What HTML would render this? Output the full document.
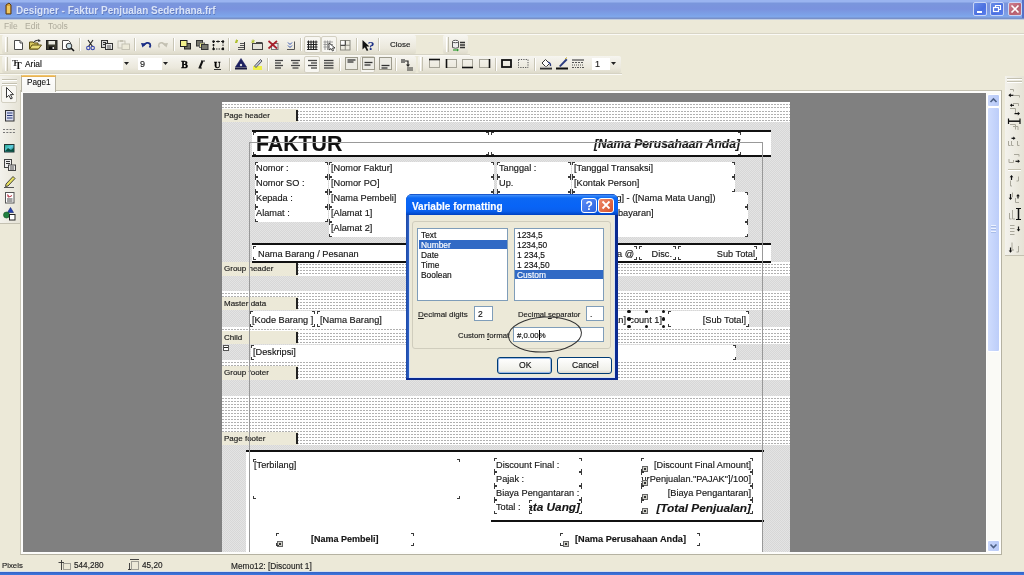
<!DOCTYPE html>
<html><head><meta charset="utf-8"><style>
*{margin:0;padding:0;box-sizing:border-box}
html,body{width:1024px;height:575px;overflow:hidden;background:#ECE9D8;font-family:"Liberation Sans",sans-serif;color:#000;position:relative}
#root{position:absolute;left:0;top:0;width:1024px;height:575px;overflow:hidden;will-change:transform}
.a{position:absolute}
.t{position:absolute;white-space:pre;line-height:1;-webkit-text-stroke:0.15px currentColor}
.dot{background-color:#fff;background-image:linear-gradient(#fff 2px,transparent 2px),linear-gradient(90deg,#b0b0b0 2px,#fff 2px);background-size:3px 3px;background-position:0 0}
.hat{background-color:#e4e4e4;background-image:linear-gradient(45deg,#d7d7d7 25%,transparent 25%,transparent 75%,#d7d7d7 75%),linear-gradient(45deg,#d7d7d7 25%,transparent 25%,transparent 75%,#d7d7d7 75%);background-size:2px 2px;background-position:0 0,1px 1px}
.lbl{position:absolute;left:0;width:76px;background:#ECE9D8;font-size:8px;padding-left:2px;white-space:pre;color:#1a1a1a;-webkit-text-stroke:0.15px currentColor}
.lbl:after{content:"";position:absolute;right:0;top:1px;bottom:1px;width:2px;background:#222}
.w{position:absolute;background:#fff}
.sep{position:absolute;width:2px;border-left:1px solid #c9c6b6;border-right:1px solid #fff}
.grip{position:absolute;width:3px;border-left:1px solid #fff;border-right:1px solid #c4c1b1}
svg{position:absolute;overflow:visible}
</style></head><body><div id="root">
<div class="a" style="left:0px;top:0px;width:1024px;height:19px;background:linear-gradient(#9ab4f0 0px,#9ab4f0 2px,#7a96dc 3px,#7a92de 9px,#7ca2e8 15px,#80a8ec 17px,#7890c8 18px,#7890c8 19px)"></div>
<div class="a" style="left:0px;top:19px;width:1024px;height:1px;background:#c2cde0"></div>
<div class="t" style="left:16px;top:5.5px;font-size:10px;font-weight:bold;color:#dae4f8;-webkit-text-stroke:0;text-shadow:0.5px 0.5px 0 rgba(60,80,150,0.5)">Designer - Faktur Penjualan Sederhana.frf</div>
<svg style="left:2px;top:2px" width="12" height="14"><path d="M4 3 L7 1 L9 3 L9 12 L4 12 Z" fill="#d9a43a" stroke="#5a3a10" stroke-width="1"/><rect x="5" y="4" width="3" height="7" fill="#f0c860"/></svg>
<div class="a" style="left:973px;top:2px;width:14px;height:14px;background:linear-gradient(135deg,#6a8de8,#4a6fe0 60%,#5b80ee);border:1px solid #c9d6f6;border-radius:2px"></div>
<div class="a" style="left:990px;top:2px;width:14px;height:14px;background:linear-gradient(135deg,#6a8de8,#4a6fe0 60%,#5b80ee);border:1px solid #c9d6f6;border-radius:2px"></div>
<div class="a" style="left:1008px;top:2px;width:14px;height:14px;background:linear-gradient(135deg,#d0808f,#b86070 60%,#c07080);border:1px solid #c9d6f6;border-radius:2px"></div>
<svg style="left:973px;top:2px" width="50" height="14"><rect x="4" y="9" width="5" height="2" fill="#fff"/><rect x="20.5" y="5.5" width="5" height="4" fill="none" stroke="#fff" stroke-width="1.2"/><path d="M22.5 5.5 V3.5 H27.5 V7.5 H25.5" fill="none" stroke="#fff" stroke-width="1.2"/><path d="M38.5 3.5 L45.5 10.5 M45.5 3.5 L38.5 10.5" stroke="#fff" stroke-width="1.6"/></svg>
<div class="a" style="left:1022px;top:0px;width:2px;height:18px;background:#5470c8"></div>
<div class="a" style="left:0px;top:20px;width:1024px;height:14px;background:#ECE9D8"></div>
<div class="a" style="left:0px;top:33px;width:1024px;height:1px;background:#d8d5c6"></div>
<div class="a" style="left:0px;top:34px;width:1024px;height:1px;background:#fbfaf6"></div>
<div class="t" style="left:4px;top:22px;font-size:8.5px;color:#adaa9b;-webkit-text-stroke:0">File</div>
<div class="t" style="left:25px;top:22px;font-size:8.5px;color:#adaa9b;-webkit-text-stroke:0">Edit</div>
<div class="t" style="left:48px;top:22px;font-size:8.5px;color:#adaa9b;-webkit-text-stroke:0">Tools</div>
<div class="a" style="left:0px;top:54px;width:470px;height:1px;background:#d6d3c4"></div>
<div class="a" style="left:0px;top:55px;width:470px;height:1px;background:#faf9f4"></div>
<div class="a" style="left:0px;top:73px;width:622px;height:1px;background:#d6d3c4"></div>
<div class="a" style="left:0px;top:74px;width:622px;height:1px;background:#faf9f4"></div>
<div class="a" style="left:2px;top:35px;width:414px;height:19px;background:linear-gradient(#f6f5f0,#ebe8dc 70%,#dedbcb);border-radius:2px"></div>
<div class="a" style="left:443px;top:35px;width:25px;height:19px;background:linear-gradient(#f6f5f0,#ebe8dc 70%,#dedbcb);border-radius:2px"></div>
<div class="a" style="left:2px;top:56px;width:414px;height:17px;background:linear-gradient(#f6f5f0,#ebe8dc 70%,#dedbcb);border-radius:2px"></div>
<div class="a" style="left:418px;top:56px;width:203px;height:17px;background:linear-gradient(#f6f5f0,#ebe8dc 70%,#dedbcb);border-radius:2px"></div>
<div class="grip" style="left:5px;top:37px;width:3px;height:15px;"></div>
<div class="grip" style="left:446px;top:37px;width:3px;height:15px;"></div>
<div class="grip" style="left:5px;top:57px;width:3px;height:14px;"></div>
<div class="grip" style="left:420px;top:57px;width:3px;height:14px;"></div>
<div class="sep" style="left:79px;top:38px;width:2px;height:13px;"></div>
<div class="sep" style="left:134px;top:38px;width:2px;height:13px;"></div>
<div class="sep" style="left:173px;top:38px;width:2px;height:13px;"></div>
<div class="sep" style="left:228px;top:38px;width:2px;height:13px;"></div>
<div class="sep" style="left:300px;top:38px;width:2px;height:13px;"></div>
<div class="sep" style="left:356px;top:38px;width:2px;height:13px;"></div>
<div class="sep" style="left:378px;top:38px;width:2px;height:13px;"></div>
<div class="sep" style="left:229px;top:58px;width:2px;height:13px;"></div>
<div class="sep" style="left:267px;top:58px;width:2px;height:13px;"></div>
<div class="sep" style="left:339px;top:58px;width:2px;height:13px;"></div>
<div class="sep" style="left:395px;top:58px;width:2px;height:13px;"></div>
<div class="sep" style="left:495px;top:58px;width:2px;height:13px;"></div>
<div class="sep" style="left:534px;top:58px;width:2px;height:13px;"></div>
<div class="a" style="left:304px;top:36px;width:17px;height:17px;background:#f7f6f1;border:1px solid #d3d0c2;border-radius:2px"></div>
<div class="a" style="left:321px;top:36px;width:16px;height:17px;background:#f7f6f1;border:1px solid #d3d0c2;border-radius:2px"></div>
<div class="a" style="left:304px;top:56px;width:16px;height:17px;background:#f7f6f1;border:1px solid #d3d0c2;border-radius:2px"></div>
<div class="a" style="left:360px;top:56px;width:15px;height:17px;background:#f7f6f1;border:1px solid #d3d0c2;border-radius:2px"></div>
<div class="t" style="left:390px;top:41px;font-size:8px;color:#222">Close</div>
<div class="a" style="left:11px;top:58px;width:112px;height:12px;background:#fff"></div>
<div class="t" style="left:25px;top:60px;font-size:8.4px;color:#111">Arial</div>
<svg style="left:12px;top:58px" width="12" height="12"><text x="0" y="8" font-family="Liberation Serif" font-size="9" font-weight="bold" fill="#333">T</text><text x="3" y="11" font-family="Liberation Serif" font-size="10" font-weight="bold" fill="#111">T</text></svg>
<svg style="left:124px;top:62px" width="6" height="4"><path d="M0 0 H5 L2.5 3 Z" fill="#222"/></svg>
<div class="a" style="left:138px;top:58px;width:24px;height:12px;background:#fff"></div>
<div class="t" style="left:140px;top:59.5px;font-size:9px;color:#222">9</div>
<svg style="left:163px;top:62px" width="6" height="4"><path d="M0 0 H5 L2.5 3 Z" fill="#222"/></svg>
<div class="a" style="left:592px;top:58px;width:18px;height:12px;background:#fff"></div>
<div class="t" style="left:595px;top:59.5px;font-size:9px;color:#222">1</div>
<svg style="left:611px;top:62px" width="6" height="4"><path d="M0 0 H5 L2.5 3 Z" fill="#222"/></svg>
<div class="a" style="left:0px;top:76px;width:20px;height:148px;background:linear-gradient(90deg,#f3f2ec,#e6e3d6)"></div>
<div class="a" style="left:2px;top:79px;width:15px;height:1px;background:#c4c1b1"></div>
<div class="a" style="left:2px;top:80px;width:15px;height:1px;background:#fff"></div>
<div class="a" style="left:2px;top:83px;width:15px;height:1px;background:#c4c1b1"></div>
<div class="a" style="left:2px;top:84px;width:15px;height:1px;background:#fff"></div>
<div class="a" style="left:1px;top:85px;width:16px;height:18px;background:#f7f6f1;border:1px solid #d3d0c2;border-radius:2px"></div>
<div class="a" style="left:0px;top:223px;width:20px;height:1px;background:#c4c1b1"></div>
<div class="a" style="left:1005px;top:76px;width:19px;height:180px;background:linear-gradient(90deg,#f3f2ec,#e6e3d6)"></div>
<div class="a" style="left:1007px;top:78px;width:15px;height:1px;background:#c4c1b1"></div>
<div class="a" style="left:1007px;top:79px;width:15px;height:1px;background:#fff"></div>
<div class="a" style="left:1007px;top:81px;width:15px;height:1px;background:#c4c1b1"></div>
<div class="a" style="left:1007px;top:82px;width:15px;height:1px;background:#fff"></div>
<div class="a" style="left:1008px;top:169px;width:13px;height:1px;background:#c4c1b1"></div>
<div class="a" style="left:1008px;top:170px;width:13px;height:1px;background:#fff"></div>
<div class="a" style="left:1005px;top:255px;width:19px;height:1px;background:#c4c1b1"></div>
<div class="a" style="left:20px;top:90px;width:982px;height:465px;background:#fdfdfb;border-top:1px solid #c5c2b2;border-right:1px solid #b5b2a2;border-bottom:1px solid #b5b2a2;border-left:1px solid #c9c6b6"></div>
<div class="a" style="left:21px;top:75px;width:35px;height:17px;background:linear-gradient(#fefefe,#f6f6f2);border-left:1px solid #b5b2a2;border-right:1px solid #b5b2a2"></div>
<div class="a" style="left:21px;top:75px;width:35px;height:2px;background:linear-gradient(#f5cf7c,#e3a845);border-radius:2px 2px 0 0"></div>
<div class="t" style="left:27px;top:78.5px;font-size:8.2px;color:#111;-webkit-text-stroke:0.1px #111">Page1</div>
<div class="a" style="left:23px;top:93px;width:963px;height:459px;background:#808080"></div>
<div class="a" style="left:222px;top:102px;width:568px;height:450px;overflow:hidden">
<div class="a dot" style="left:0;top:0px;width:568px;height:7px"></div>
<div class="a dot" style="left:0;top:7px;width:568px;height:13px"></div>
<div class="lbl" style="top:7px;height:13px;line-height:13px">Page header</div>
<div class="a hat" style="left:0;top:20px;width:568px;height:140px"></div>
<div class="a dot" style="left:0;top:160px;width:568px;height:14px"></div>
<div class="lbl" style="top:160px;height:14px;line-height:14px">Group header</div>
<div class="a hat" style="left:0;top:174px;width:568px;height:15px"></div>
<div class="a dot" style="left:0;top:189px;width:568px;height:6px"></div>
<div class="a dot" style="left:0;top:195px;width:568px;height:13px"></div>
<div class="lbl" style="top:195px;height:13px;line-height:13px">Master data</div>
<div class="a hat" style="left:0;top:208px;width:568px;height:17px"></div>
<div class="a dot" style="left:0;top:225px;width:568px;height:4px"></div>
<div class="a dot" style="left:0;top:229px;width:568px;height:13px"></div>
<div class="lbl" style="top:229px;height:13px;line-height:13px">Child</div>
<div class="a hat" style="left:0;top:242px;width:568px;height:16px"></div>
<div class="a dot" style="left:0;top:258px;width:568px;height:6px"></div>
<div class="a dot" style="left:0;top:264px;width:568px;height:14px"></div>
<div class="lbl" style="top:264px;height:14px;line-height:14px">Group footer</div>
<div class="a hat" style="left:0;top:278px;width:568px;height:16px"></div>
<div class="a dot" style="left:0;top:294px;width:568px;height:36px"></div>
<div class="a dot" style="left:0;top:330px;width:568px;height:13px"></div>
<div class="lbl" style="top:330px;height:13px;line-height:13px">Page footer</div>
<div class="a hat" style="left:0;top:343px;width:568px;height:107px"></div>
</div>
<div class="a" style="left:252px;top:130px;width:519px;height:27px;background:#fff;"></div>
<div class="a" style="left:252px;top:130px;width:519px;height:2px;background:#111"></div>
<div class="a" style="left:252px;top:155px;width:519px;height:2px;background:#111"></div>
<div class="a" style="left:253px;top:132px;width:236px;height:23px;overflow:hidden"><div class="t" style="left:3px;top:1.3px;height:23px;line-height:23px;font-size:21.3px;color:#161616;font-weight:bold;color:#111">FAKTUR</div></div>
<div class="a" style="left:491px;top:132px;width:250px;height:23px;overflow:hidden"><div class="t" style="right:1px;top:1px;height:23px;line-height:23px;font-size:12.1px;color:#161616;font-weight:bold;font-style:italic;color:#1a1a1a">[Nama Perusahaan Anda]</div></div>
<div class="a" style="left:255px;top:162px;width:73px;height:60px;background:#fff;"></div>
<div class="a" style="left:329px;top:162px;width:165px;height:75px;background:#fff;"></div>
<div class="a" style="left:497px;top:162px;width:74px;height:60px;background:#fff;"></div>
<div class="a" style="left:572px;top:162px;width:163px;height:30px;background:#fff;"></div>
<div class="a" style="left:572px;top:192px;width:176px;height:45px;background:#fff;"></div>
<div class="a" style="left:255px;top:162px;width:73px;height:15px;overflow:hidden"><div class="t" style="left:1px;top:-0.8px;height:15px;line-height:15px;font-size:9.2px;color:#161616;">Nomor :</div></div>
<div class="a" style="left:255px;top:177px;width:73px;height:15px;overflow:hidden"><div class="t" style="left:1px;top:-0.8px;height:15px;line-height:15px;font-size:9.2px;color:#161616;">Nomor SO :</div></div>
<div class="a" style="left:255px;top:192px;width:73px;height:15px;overflow:hidden"><div class="t" style="left:1px;top:-0.8px;height:15px;line-height:15px;font-size:9.2px;color:#161616;">Kepada :</div></div>
<div class="a" style="left:255px;top:207px;width:73px;height:15px;overflow:hidden"><div class="t" style="left:1px;top:-0.8px;height:15px;line-height:15px;font-size:9.2px;color:#161616;">Alamat :</div></div>
<div class="a" style="left:329px;top:162px;width:165px;height:15px;overflow:hidden"><div class="t" style="left:2px;top:-0.8px;height:15px;line-height:15px;font-size:9.2px;color:#161616;">[Nomor Faktur]</div></div>
<div class="a" style="left:329px;top:177px;width:165px;height:15px;overflow:hidden"><div class="t" style="left:2px;top:-0.8px;height:15px;line-height:15px;font-size:9.2px;color:#161616;">[Nomor PO]</div></div>
<div class="a" style="left:329px;top:192px;width:165px;height:15px;overflow:hidden"><div class="t" style="left:2px;top:-0.8px;height:15px;line-height:15px;font-size:9.2px;color:#161616;">[Nama Pembeli]</div></div>
<div class="a" style="left:329px;top:207px;width:165px;height:15px;overflow:hidden"><div class="t" style="left:2px;top:-0.8px;height:15px;line-height:15px;font-size:9.2px;color:#161616;">[Alamat 1]</div></div>
<div class="a" style="left:329px;top:222px;width:165px;height:15px;overflow:hidden"><div class="t" style="left:2px;top:-0.8px;height:15px;line-height:15px;font-size:9.2px;color:#161616;">[Alamat 2]</div></div>
<div class="a" style="left:497px;top:162px;width:74px;height:15px;overflow:hidden"><div class="t" style="left:2px;top:-0.8px;height:15px;line-height:15px;font-size:9.2px;color:#161616;">Tanggal :</div></div>
<div class="a" style="left:497px;top:177px;width:74px;height:15px;overflow:hidden"><div class="t" style="left:2px;top:-0.8px;height:15px;line-height:15px;font-size:9.2px;color:#161616;">Up.</div></div>
<div class="a" style="left:497px;top:192px;width:74px;height:15px;overflow:hidden"><div class="t" style="left:2px;top:-0.8px;height:15px;line-height:15px;font-size:9.2px;color:#161616;"></div></div>
<div class="a" style="left:497px;top:207px;width:74px;height:15px;overflow:hidden"><div class="t" style="left:2px;top:-0.8px;height:15px;line-height:15px;font-size:9.2px;color:#161616;"></div></div>
<div class="a" style="left:572px;top:162px;width:163px;height:15px;overflow:hidden"><div class="t" style="left:2px;top:-0.8px;height:15px;line-height:15px;font-size:9.2px;color:#161616;">[Tanggal Transaksi]</div></div>
<div class="a" style="left:572px;top:177px;width:163px;height:15px;overflow:hidden"><div class="t" style="left:2px;top:-0.8px;height:15px;line-height:15px;font-size:9.2px;color:#161616;">[Kontak Person]</div></div>
<div class="a" style="left:572px;top:192px;width:176px;height:15px;overflow:hidden"><div class="t" style="left:2px;top:-0.8px;height:15px;line-height:15px;font-size:9.2px;color:#161616;">[Mata Uang] - ([Nama Mata Uang])</div></div>
<div class="a" style="left:572px;top:207px;width:176px;height:15px;overflow:hidden"><div class="t" style="left:2px;top:-0.8px;height:15px;line-height:15px;font-size:9.2px;color:#161616;">[Cara Pembayaran]</div></div>
<div class="a" style="left:572px;top:222px;width:176px;height:15px;overflow:hidden"><div class="t" style="left:2px;top:-0.8px;height:15px;line-height:15px;font-size:9.2px;color:#161616;"></div></div>
<div class="a" style="left:252px;top:243px;width:519px;height:20px;background:#fff;"></div>
<div class="a" style="left:252px;top:243px;width:519px;height:2px;background:#111"></div>
<div class="a" style="left:252px;top:261px;width:519px;height:2px;background:#111"></div>
<div class="a" style="left:253px;top:246px;width:302px;height:14px;overflow:hidden"><div class="t" style="left:5px;top:0.5px;height:14px;line-height:14px;font-size:9.2px;color:#161616;">Nama Barang / Pesanan</div></div>
<div class="a" style="left:557px;top:246px;width:80px;height:14px;overflow:hidden"><div class="t" style="right:3px;top:0.5px;height:14px;line-height:14px;font-size:9.2px;color:#161616;">Harga @</div></div>
<div class="a" style="left:639px;top:246px;width:37px;height:14px;overflow:hidden"><div class="t" style="right:4px;top:0.5px;height:14px;line-height:14px;font-size:9.2px;color:#161616;">Disc.</div></div>
<div class="a" style="left:678px;top:246px;width:79px;height:14px;overflow:hidden"><div class="t" style="right:2px;top:0.5px;height:14px;line-height:14px;font-size:9.2px;color:#161616;">Sub Total</div></div>
<div class="a" style="left:250px;top:311px;width:499px;height:16px;background:#fff;"></div>
<div class="a" style="left:250px;top:311px;width:65px;height:16px;overflow:hidden"><div class="t" style="left:2px;top:0.5px;height:16px;line-height:16px;font-size:9.2px;color:#161616;">[Kode Barang ]</div></div>
<div class="a" style="left:317px;top:311px;width:203px;height:16px;overflow:hidden"><div class="t" style="left:3px;top:0.5px;height:16px;line-height:16px;font-size:9.2px;color:#161616;">[Nama Barang]</div></div>
<div class="a" style="left:540px;top:311px;width:87px;height:16px;overflow:hidden"><div class="t" style="right:1px;top:0.5px;height:16px;line-height:16px;font-size:9.2px;color:#161616;">[Jumlah Pesanan]</div></div>
<div class="a" style="left:631px;top:311px;width:32px;height:16px;overflow:hidden"><div class="t" style="right:1px;top:0.5px;height:16px;line-height:16px;font-size:9.2px;color:#161616;">[Discount 1]</div></div>
<div class="a" style="left:668px;top:311px;width:81px;height:16px;overflow:hidden"><div class="t" style="right:3px;top:0.5px;height:16px;line-height:16px;font-size:9.2px;color:#161616;">[Sub Total]</div></div>
<div class="a" style="left:251px;top:345px;width:485px;height:15px;background:#fff;"></div>
<div class="a" style="left:251px;top:345px;width:485px;height:15px;overflow:hidden"><div class="t" style="left:2px;top:0px;height:15px;line-height:15px;font-size:9.2px;color:#161616;">[Deskripsi]</div></div>
<div class="a" style="left:246px;top:451px;width:517px;height:101px;background:#fff;"></div>
<div class="a" style="left:246px;top:450px;width:518px;height:2px;background:#111"></div>
<div class="a" style="left:253px;top:459px;width:207px;height:13px;overflow:hidden"><div class="t" style="left:1px;top:0px;height:13px;line-height:13px;font-size:9.2px;color:#161616;">[Terbilang]</div></div>
<div class="a" style="left:494px;top:458px;width:88px;height:14px;overflow:hidden"><div class="t" style="left:2px;top:0px;height:14px;line-height:14px;font-size:9.2px;color:#161616;">Discount Final :</div></div>
<div class="a" style="left:494px;top:472px;width:88px;height:14px;overflow:hidden"><div class="t" style="left:2px;top:0px;height:14px;line-height:14px;font-size:9.2px;color:#161616;">Pajak :</div></div>
<div class="a" style="left:494px;top:486px;width:88px;height:14px;overflow:hidden"><div class="t" style="left:2px;top:0px;height:14px;line-height:14px;font-size:9.2px;color:#161616;">Biaya Pengantaran :</div></div>
<div class="a" style="left:494px;top:500px;width:88px;height:14px;overflow:hidden"><div class="t" style="left:2px;top:0px;height:14px;line-height:14px;font-size:9.2px;color:#161616;">Total :</div></div>
<div class="a" style="left:529px;top:499px;width:52px;height:16px;overflow:hidden"><div class="t" style="right:1px;top:0px;height:16px;line-height:16px;font-size:11.8px;color:#161616;font-weight:bold;font-style:italic">[Nama Mata Uang]</div></div>
<div class="a" style="left:641px;top:458px;width:112px;height:14px;overflow:hidden"><div class="t" style="right:2px;top:0px;height:14px;line-height:14px;font-size:9.2px;color:#161616;">[Discount Final Amount]</div></div>
<div class="a" style="left:641px;top:472px;width:112px;height:14px;overflow:hidden"><div class="t" style="right:2px;top:0px;height:14px;line-height:14px;font-size:9.2px;color:#161616;">[[FakturPenjualan."PAJAK"]/100]</div></div>
<div class="a" style="left:641px;top:486px;width:112px;height:14px;overflow:hidden"><div class="t" style="right:2px;top:0px;height:14px;line-height:14px;font-size:9.2px;color:#161616;">[Biaya Pengantaran]</div></div>
<div class="a" style="left:641px;top:499px;width:112px;height:17px;overflow:hidden"><div class="t" style="right:2px;top:0.8px;height:17px;line-height:17px;font-size:11.8px;color:#161616;font-weight:bold;font-style:italic">[Total Penjualan]</div></div>
<div class="a" style="left:491px;top:520px;width:273px;height:2px;background:#111"></div>
<div class="a" style="left:276px;top:533px;width:138px;height:13px;overflow:hidden"><div class="t" style="left:35px;top:0px;height:13px;line-height:13px;font-size:9px;color:#161616;font-weight:bold">[Nama Pembeli]</div></div>
<div class="a" style="left:560px;top:533px;width:140px;height:13px;overflow:hidden"><div class="t" style="left:15px;top:0px;height:13px;line-height:13px;font-size:9.2px;color:#161616;font-weight:bold">[Nama Perusahaan Anda]</div></div>
<div class="a" style="left:642px;top:466px;width:6px;height:6px;background:#d0d0c8;border:1px solid #666"></div>
<div class="a" style="left:644px;top:468px;width:2px;height:2px;background:#333"></div>
<div class="a" style="left:642px;top:480px;width:6px;height:6px;background:#d0d0c8;border:1px solid #666"></div>
<div class="a" style="left:644px;top:482px;width:2px;height:2px;background:#333"></div>
<div class="a" style="left:642px;top:494px;width:6px;height:6px;background:#d0d0c8;border:1px solid #666"></div>
<div class="a" style="left:644px;top:496px;width:2px;height:2px;background:#333"></div>
<div class="a" style="left:642px;top:508px;width:6px;height:6px;background:#d0d0c8;border:1px solid #666"></div>
<div class="a" style="left:644px;top:510px;width:2px;height:2px;background:#333"></div>
<div class="a" style="left:277px;top:541px;width:6px;height:6px;background:#d0d0c8;border:1px solid #666"></div>
<div class="a" style="left:279px;top:543px;width:2px;height:2px;background:#333"></div>
<div class="a" style="left:563px;top:541px;width:6px;height:6px;background:#d0d0c8;border:1px solid #666"></div>
<div class="a" style="left:565px;top:543px;width:2px;height:2px;background:#333"></div>
<div class="a" style="left:249px;top:142px;width:513px;height:1px;background:#999"></div>
<div class="a" style="left:249px;top:142px;width:1px;height:410px;background:#999"></div>
<div class="a" style="left:762px;top:142px;width:1px;height:410px;background:#999"></div>
<div class="a" style="left:253px;top:132px;width:3px;height:1px;background:#3a3a3a"></div><div class="a" style="left:253px;top:132px;width:1px;height:3px;background:#3a3a3a"></div><div class="a" style="left:486px;top:132px;width:3px;height:1px;background:#3a3a3a"></div><div class="a" style="left:488px;top:132px;width:1px;height:3px;background:#3a3a3a"></div><div class="a" style="left:253px;top:154px;width:3px;height:1px;background:#3a3a3a"></div><div class="a" style="left:253px;top:152px;width:1px;height:3px;background:#3a3a3a"></div><div class="a" style="left:486px;top:154px;width:3px;height:1px;background:#3a3a3a"></div><div class="a" style="left:488px;top:152px;width:1px;height:3px;background:#3a3a3a"></div><div class="a" style="left:491px;top:132px;width:3px;height:1px;background:#3a3a3a"></div><div class="a" style="left:491px;top:132px;width:1px;height:3px;background:#3a3a3a"></div><div class="a" style="left:738px;top:132px;width:3px;height:1px;background:#3a3a3a"></div><div class="a" style="left:740px;top:132px;width:1px;height:3px;background:#3a3a3a"></div><div class="a" style="left:491px;top:154px;width:3px;height:1px;background:#3a3a3a"></div><div class="a" style="left:491px;top:152px;width:1px;height:3px;background:#3a3a3a"></div><div class="a" style="left:738px;top:154px;width:3px;height:1px;background:#3a3a3a"></div><div class="a" style="left:740px;top:152px;width:1px;height:3px;background:#3a3a3a"></div><div class="a" style="left:255px;top:162px;width:3px;height:1px;background:#3a3a3a"></div><div class="a" style="left:255px;top:162px;width:1px;height:3px;background:#3a3a3a"></div><div class="a" style="left:325px;top:162px;width:3px;height:1px;background:#3a3a3a"></div><div class="a" style="left:327px;top:162px;width:1px;height:3px;background:#3a3a3a"></div><div class="a" style="left:255px;top:176px;width:3px;height:1px;background:#3a3a3a"></div><div class="a" style="left:255px;top:174px;width:1px;height:3px;background:#3a3a3a"></div><div class="a" style="left:325px;top:176px;width:3px;height:1px;background:#3a3a3a"></div><div class="a" style="left:327px;top:174px;width:1px;height:3px;background:#3a3a3a"></div><div class="a" style="left:255px;top:177px;width:3px;height:1px;background:#3a3a3a"></div><div class="a" style="left:255px;top:177px;width:1px;height:3px;background:#3a3a3a"></div><div class="a" style="left:325px;top:177px;width:3px;height:1px;background:#3a3a3a"></div><div class="a" style="left:327px;top:177px;width:1px;height:3px;background:#3a3a3a"></div><div class="a" style="left:255px;top:191px;width:3px;height:1px;background:#3a3a3a"></div><div class="a" style="left:255px;top:189px;width:1px;height:3px;background:#3a3a3a"></div><div class="a" style="left:325px;top:191px;width:3px;height:1px;background:#3a3a3a"></div><div class="a" style="left:327px;top:189px;width:1px;height:3px;background:#3a3a3a"></div><div class="a" style="left:255px;top:192px;width:3px;height:1px;background:#3a3a3a"></div><div class="a" style="left:255px;top:192px;width:1px;height:3px;background:#3a3a3a"></div><div class="a" style="left:325px;top:192px;width:3px;height:1px;background:#3a3a3a"></div><div class="a" style="left:327px;top:192px;width:1px;height:3px;background:#3a3a3a"></div><div class="a" style="left:255px;top:206px;width:3px;height:1px;background:#3a3a3a"></div><div class="a" style="left:255px;top:204px;width:1px;height:3px;background:#3a3a3a"></div><div class="a" style="left:325px;top:206px;width:3px;height:1px;background:#3a3a3a"></div><div class="a" style="left:327px;top:204px;width:1px;height:3px;background:#3a3a3a"></div><div class="a" style="left:255px;top:207px;width:3px;height:1px;background:#3a3a3a"></div><div class="a" style="left:255px;top:207px;width:1px;height:3px;background:#3a3a3a"></div><div class="a" style="left:325px;top:207px;width:3px;height:1px;background:#3a3a3a"></div><div class="a" style="left:327px;top:207px;width:1px;height:3px;background:#3a3a3a"></div><div class="a" style="left:255px;top:221px;width:3px;height:1px;background:#3a3a3a"></div><div class="a" style="left:255px;top:219px;width:1px;height:3px;background:#3a3a3a"></div><div class="a" style="left:325px;top:221px;width:3px;height:1px;background:#3a3a3a"></div><div class="a" style="left:327px;top:219px;width:1px;height:3px;background:#3a3a3a"></div><div class="a" style="left:329px;top:162px;width:3px;height:1px;background:#3a3a3a"></div><div class="a" style="left:329px;top:162px;width:1px;height:3px;background:#3a3a3a"></div><div class="a" style="left:491px;top:162px;width:3px;height:1px;background:#3a3a3a"></div><div class="a" style="left:493px;top:162px;width:1px;height:3px;background:#3a3a3a"></div><div class="a" style="left:329px;top:176px;width:3px;height:1px;background:#3a3a3a"></div><div class="a" style="left:329px;top:174px;width:1px;height:3px;background:#3a3a3a"></div><div class="a" style="left:491px;top:176px;width:3px;height:1px;background:#3a3a3a"></div><div class="a" style="left:493px;top:174px;width:1px;height:3px;background:#3a3a3a"></div><div class="a" style="left:329px;top:177px;width:3px;height:1px;background:#3a3a3a"></div><div class="a" style="left:329px;top:177px;width:1px;height:3px;background:#3a3a3a"></div><div class="a" style="left:491px;top:177px;width:3px;height:1px;background:#3a3a3a"></div><div class="a" style="left:493px;top:177px;width:1px;height:3px;background:#3a3a3a"></div><div class="a" style="left:329px;top:191px;width:3px;height:1px;background:#3a3a3a"></div><div class="a" style="left:329px;top:189px;width:1px;height:3px;background:#3a3a3a"></div><div class="a" style="left:491px;top:191px;width:3px;height:1px;background:#3a3a3a"></div><div class="a" style="left:493px;top:189px;width:1px;height:3px;background:#3a3a3a"></div><div class="a" style="left:329px;top:192px;width:3px;height:1px;background:#3a3a3a"></div><div class="a" style="left:329px;top:192px;width:1px;height:3px;background:#3a3a3a"></div><div class="a" style="left:491px;top:192px;width:3px;height:1px;background:#3a3a3a"></div><div class="a" style="left:493px;top:192px;width:1px;height:3px;background:#3a3a3a"></div><div class="a" style="left:329px;top:206px;width:3px;height:1px;background:#3a3a3a"></div><div class="a" style="left:329px;top:204px;width:1px;height:3px;background:#3a3a3a"></div><div class="a" style="left:491px;top:206px;width:3px;height:1px;background:#3a3a3a"></div><div class="a" style="left:493px;top:204px;width:1px;height:3px;background:#3a3a3a"></div><div class="a" style="left:329px;top:207px;width:3px;height:1px;background:#3a3a3a"></div><div class="a" style="left:329px;top:207px;width:1px;height:3px;background:#3a3a3a"></div><div class="a" style="left:491px;top:207px;width:3px;height:1px;background:#3a3a3a"></div><div class="a" style="left:493px;top:207px;width:1px;height:3px;background:#3a3a3a"></div><div class="a" style="left:329px;top:221px;width:3px;height:1px;background:#3a3a3a"></div><div class="a" style="left:329px;top:219px;width:1px;height:3px;background:#3a3a3a"></div><div class="a" style="left:491px;top:221px;width:3px;height:1px;background:#3a3a3a"></div><div class="a" style="left:493px;top:219px;width:1px;height:3px;background:#3a3a3a"></div><div class="a" style="left:329px;top:222px;width:3px;height:1px;background:#3a3a3a"></div><div class="a" style="left:329px;top:222px;width:1px;height:3px;background:#3a3a3a"></div><div class="a" style="left:491px;top:222px;width:3px;height:1px;background:#3a3a3a"></div><div class="a" style="left:493px;top:222px;width:1px;height:3px;background:#3a3a3a"></div><div class="a" style="left:329px;top:236px;width:3px;height:1px;background:#3a3a3a"></div><div class="a" style="left:329px;top:234px;width:1px;height:3px;background:#3a3a3a"></div><div class="a" style="left:491px;top:236px;width:3px;height:1px;background:#3a3a3a"></div><div class="a" style="left:493px;top:234px;width:1px;height:3px;background:#3a3a3a"></div><div class="a" style="left:497px;top:162px;width:3px;height:1px;background:#3a3a3a"></div><div class="a" style="left:497px;top:162px;width:1px;height:3px;background:#3a3a3a"></div><div class="a" style="left:568px;top:162px;width:3px;height:1px;background:#3a3a3a"></div><div class="a" style="left:570px;top:162px;width:1px;height:3px;background:#3a3a3a"></div><div class="a" style="left:497px;top:176px;width:3px;height:1px;background:#3a3a3a"></div><div class="a" style="left:497px;top:174px;width:1px;height:3px;background:#3a3a3a"></div><div class="a" style="left:568px;top:176px;width:3px;height:1px;background:#3a3a3a"></div><div class="a" style="left:570px;top:174px;width:1px;height:3px;background:#3a3a3a"></div><div class="a" style="left:497px;top:177px;width:3px;height:1px;background:#3a3a3a"></div><div class="a" style="left:497px;top:177px;width:1px;height:3px;background:#3a3a3a"></div><div class="a" style="left:568px;top:177px;width:3px;height:1px;background:#3a3a3a"></div><div class="a" style="left:570px;top:177px;width:1px;height:3px;background:#3a3a3a"></div><div class="a" style="left:497px;top:191px;width:3px;height:1px;background:#3a3a3a"></div><div class="a" style="left:497px;top:189px;width:1px;height:3px;background:#3a3a3a"></div><div class="a" style="left:568px;top:191px;width:3px;height:1px;background:#3a3a3a"></div><div class="a" style="left:570px;top:189px;width:1px;height:3px;background:#3a3a3a"></div><div class="a" style="left:497px;top:192px;width:3px;height:1px;background:#3a3a3a"></div><div class="a" style="left:497px;top:192px;width:1px;height:3px;background:#3a3a3a"></div><div class="a" style="left:568px;top:192px;width:3px;height:1px;background:#3a3a3a"></div><div class="a" style="left:570px;top:192px;width:1px;height:3px;background:#3a3a3a"></div><div class="a" style="left:497px;top:206px;width:3px;height:1px;background:#3a3a3a"></div><div class="a" style="left:497px;top:204px;width:1px;height:3px;background:#3a3a3a"></div><div class="a" style="left:568px;top:206px;width:3px;height:1px;background:#3a3a3a"></div><div class="a" style="left:570px;top:204px;width:1px;height:3px;background:#3a3a3a"></div><div class="a" style="left:497px;top:207px;width:3px;height:1px;background:#3a3a3a"></div><div class="a" style="left:497px;top:207px;width:1px;height:3px;background:#3a3a3a"></div><div class="a" style="left:568px;top:207px;width:3px;height:1px;background:#3a3a3a"></div><div class="a" style="left:570px;top:207px;width:1px;height:3px;background:#3a3a3a"></div><div class="a" style="left:497px;top:221px;width:3px;height:1px;background:#3a3a3a"></div><div class="a" style="left:497px;top:219px;width:1px;height:3px;background:#3a3a3a"></div><div class="a" style="left:568px;top:221px;width:3px;height:1px;background:#3a3a3a"></div><div class="a" style="left:570px;top:219px;width:1px;height:3px;background:#3a3a3a"></div><div class="a" style="left:572px;top:162px;width:3px;height:1px;background:#3a3a3a"></div><div class="a" style="left:572px;top:162px;width:1px;height:3px;background:#3a3a3a"></div><div class="a" style="left:732px;top:162px;width:3px;height:1px;background:#3a3a3a"></div><div class="a" style="left:734px;top:162px;width:1px;height:3px;background:#3a3a3a"></div><div class="a" style="left:572px;top:176px;width:3px;height:1px;background:#3a3a3a"></div><div class="a" style="left:572px;top:174px;width:1px;height:3px;background:#3a3a3a"></div><div class="a" style="left:732px;top:176px;width:3px;height:1px;background:#3a3a3a"></div><div class="a" style="left:734px;top:174px;width:1px;height:3px;background:#3a3a3a"></div><div class="a" style="left:572px;top:177px;width:3px;height:1px;background:#3a3a3a"></div><div class="a" style="left:572px;top:177px;width:1px;height:3px;background:#3a3a3a"></div><div class="a" style="left:732px;top:177px;width:3px;height:1px;background:#3a3a3a"></div><div class="a" style="left:734px;top:177px;width:1px;height:3px;background:#3a3a3a"></div><div class="a" style="left:572px;top:191px;width:3px;height:1px;background:#3a3a3a"></div><div class="a" style="left:572px;top:189px;width:1px;height:3px;background:#3a3a3a"></div><div class="a" style="left:732px;top:191px;width:3px;height:1px;background:#3a3a3a"></div><div class="a" style="left:734px;top:189px;width:1px;height:3px;background:#3a3a3a"></div><div class="a" style="left:572px;top:192px;width:3px;height:1px;background:#3a3a3a"></div><div class="a" style="left:572px;top:192px;width:1px;height:3px;background:#3a3a3a"></div><div class="a" style="left:745px;top:192px;width:3px;height:1px;background:#3a3a3a"></div><div class="a" style="left:747px;top:192px;width:1px;height:3px;background:#3a3a3a"></div><div class="a" style="left:572px;top:206px;width:3px;height:1px;background:#3a3a3a"></div><div class="a" style="left:572px;top:204px;width:1px;height:3px;background:#3a3a3a"></div><div class="a" style="left:745px;top:206px;width:3px;height:1px;background:#3a3a3a"></div><div class="a" style="left:747px;top:204px;width:1px;height:3px;background:#3a3a3a"></div><div class="a" style="left:572px;top:207px;width:3px;height:1px;background:#3a3a3a"></div><div class="a" style="left:572px;top:207px;width:1px;height:3px;background:#3a3a3a"></div><div class="a" style="left:745px;top:207px;width:3px;height:1px;background:#3a3a3a"></div><div class="a" style="left:747px;top:207px;width:1px;height:3px;background:#3a3a3a"></div><div class="a" style="left:572px;top:221px;width:3px;height:1px;background:#3a3a3a"></div><div class="a" style="left:572px;top:219px;width:1px;height:3px;background:#3a3a3a"></div><div class="a" style="left:745px;top:221px;width:3px;height:1px;background:#3a3a3a"></div><div class="a" style="left:747px;top:219px;width:1px;height:3px;background:#3a3a3a"></div><div class="a" style="left:572px;top:222px;width:3px;height:1px;background:#3a3a3a"></div><div class="a" style="left:572px;top:222px;width:1px;height:3px;background:#3a3a3a"></div><div class="a" style="left:745px;top:222px;width:3px;height:1px;background:#3a3a3a"></div><div class="a" style="left:747px;top:222px;width:1px;height:3px;background:#3a3a3a"></div><div class="a" style="left:572px;top:236px;width:3px;height:1px;background:#3a3a3a"></div><div class="a" style="left:572px;top:234px;width:1px;height:3px;background:#3a3a3a"></div><div class="a" style="left:745px;top:236px;width:3px;height:1px;background:#3a3a3a"></div><div class="a" style="left:747px;top:234px;width:1px;height:3px;background:#3a3a3a"></div><div class="a" style="left:253px;top:246px;width:3px;height:1px;background:#3a3a3a"></div><div class="a" style="left:253px;top:246px;width:1px;height:3px;background:#3a3a3a"></div><div class="a" style="left:552px;top:246px;width:3px;height:1px;background:#3a3a3a"></div><div class="a" style="left:554px;top:246px;width:1px;height:3px;background:#3a3a3a"></div><div class="a" style="left:253px;top:259px;width:3px;height:1px;background:#3a3a3a"></div><div class="a" style="left:253px;top:257px;width:1px;height:3px;background:#3a3a3a"></div><div class="a" style="left:552px;top:259px;width:3px;height:1px;background:#3a3a3a"></div><div class="a" style="left:554px;top:257px;width:1px;height:3px;background:#3a3a3a"></div><div class="a" style="left:557px;top:246px;width:3px;height:1px;background:#3a3a3a"></div><div class="a" style="left:557px;top:246px;width:1px;height:3px;background:#3a3a3a"></div><div class="a" style="left:634px;top:246px;width:3px;height:1px;background:#3a3a3a"></div><div class="a" style="left:636px;top:246px;width:1px;height:3px;background:#3a3a3a"></div><div class="a" style="left:557px;top:259px;width:3px;height:1px;background:#3a3a3a"></div><div class="a" style="left:557px;top:257px;width:1px;height:3px;background:#3a3a3a"></div><div class="a" style="left:634px;top:259px;width:3px;height:1px;background:#3a3a3a"></div><div class="a" style="left:636px;top:257px;width:1px;height:3px;background:#3a3a3a"></div><div class="a" style="left:639px;top:246px;width:3px;height:1px;background:#3a3a3a"></div><div class="a" style="left:639px;top:246px;width:1px;height:3px;background:#3a3a3a"></div><div class="a" style="left:673px;top:246px;width:3px;height:1px;background:#3a3a3a"></div><div class="a" style="left:675px;top:246px;width:1px;height:3px;background:#3a3a3a"></div><div class="a" style="left:639px;top:259px;width:3px;height:1px;background:#3a3a3a"></div><div class="a" style="left:639px;top:257px;width:1px;height:3px;background:#3a3a3a"></div><div class="a" style="left:673px;top:259px;width:3px;height:1px;background:#3a3a3a"></div><div class="a" style="left:675px;top:257px;width:1px;height:3px;background:#3a3a3a"></div><div class="a" style="left:678px;top:246px;width:3px;height:1px;background:#3a3a3a"></div><div class="a" style="left:678px;top:246px;width:1px;height:3px;background:#3a3a3a"></div><div class="a" style="left:754px;top:246px;width:3px;height:1px;background:#3a3a3a"></div><div class="a" style="left:756px;top:246px;width:1px;height:3px;background:#3a3a3a"></div><div class="a" style="left:678px;top:259px;width:3px;height:1px;background:#3a3a3a"></div><div class="a" style="left:678px;top:257px;width:1px;height:3px;background:#3a3a3a"></div><div class="a" style="left:754px;top:259px;width:3px;height:1px;background:#3a3a3a"></div><div class="a" style="left:756px;top:257px;width:1px;height:3px;background:#3a3a3a"></div><div class="a" style="left:250px;top:311px;width:3px;height:1px;background:#3a3a3a"></div><div class="a" style="left:250px;top:311px;width:1px;height:3px;background:#3a3a3a"></div><div class="a" style="left:312px;top:311px;width:3px;height:1px;background:#3a3a3a"></div><div class="a" style="left:314px;top:311px;width:1px;height:3px;background:#3a3a3a"></div><div class="a" style="left:250px;top:326px;width:3px;height:1px;background:#3a3a3a"></div><div class="a" style="left:250px;top:324px;width:1px;height:3px;background:#3a3a3a"></div><div class="a" style="left:312px;top:326px;width:3px;height:1px;background:#3a3a3a"></div><div class="a" style="left:314px;top:324px;width:1px;height:3px;background:#3a3a3a"></div><div class="a" style="left:317px;top:311px;width:3px;height:1px;background:#3a3a3a"></div><div class="a" style="left:317px;top:311px;width:1px;height:3px;background:#3a3a3a"></div><div class="a" style="left:517px;top:311px;width:3px;height:1px;background:#3a3a3a"></div><div class="a" style="left:519px;top:311px;width:1px;height:3px;background:#3a3a3a"></div><div class="a" style="left:317px;top:326px;width:3px;height:1px;background:#3a3a3a"></div><div class="a" style="left:317px;top:324px;width:1px;height:3px;background:#3a3a3a"></div><div class="a" style="left:517px;top:326px;width:3px;height:1px;background:#3a3a3a"></div><div class="a" style="left:519px;top:324px;width:1px;height:3px;background:#3a3a3a"></div><div class="a" style="left:668px;top:311px;width:3px;height:1px;background:#3a3a3a"></div><div class="a" style="left:668px;top:311px;width:1px;height:3px;background:#3a3a3a"></div><div class="a" style="left:746px;top:311px;width:3px;height:1px;background:#3a3a3a"></div><div class="a" style="left:748px;top:311px;width:1px;height:3px;background:#3a3a3a"></div><div class="a" style="left:668px;top:326px;width:3px;height:1px;background:#3a3a3a"></div><div class="a" style="left:668px;top:324px;width:1px;height:3px;background:#3a3a3a"></div><div class="a" style="left:746px;top:326px;width:3px;height:1px;background:#3a3a3a"></div><div class="a" style="left:748px;top:324px;width:1px;height:3px;background:#3a3a3a"></div><div class="a" style="left:251px;top:345px;width:3px;height:1px;background:#3a3a3a"></div><div class="a" style="left:251px;top:345px;width:1px;height:3px;background:#3a3a3a"></div><div class="a" style="left:733px;top:345px;width:3px;height:1px;background:#3a3a3a"></div><div class="a" style="left:735px;top:345px;width:1px;height:3px;background:#3a3a3a"></div><div class="a" style="left:251px;top:359px;width:3px;height:1px;background:#3a3a3a"></div><div class="a" style="left:251px;top:357px;width:1px;height:3px;background:#3a3a3a"></div><div class="a" style="left:733px;top:359px;width:3px;height:1px;background:#3a3a3a"></div><div class="a" style="left:735px;top:357px;width:1px;height:3px;background:#3a3a3a"></div><div class="a" style="left:253px;top:459px;width:3px;height:1px;background:#3a3a3a"></div><div class="a" style="left:253px;top:459px;width:1px;height:3px;background:#3a3a3a"></div><div class="a" style="left:457px;top:459px;width:3px;height:1px;background:#3a3a3a"></div><div class="a" style="left:459px;top:459px;width:1px;height:3px;background:#3a3a3a"></div><div class="a" style="left:253px;top:498px;width:3px;height:1px;background:#3a3a3a"></div><div class="a" style="left:253px;top:496px;width:1px;height:3px;background:#3a3a3a"></div><div class="a" style="left:457px;top:498px;width:3px;height:1px;background:#3a3a3a"></div><div class="a" style="left:459px;top:496px;width:1px;height:3px;background:#3a3a3a"></div><div class="a" style="left:494px;top:458px;width:3px;height:1px;background:#3a3a3a"></div><div class="a" style="left:494px;top:458px;width:1px;height:3px;background:#3a3a3a"></div><div class="a" style="left:579px;top:458px;width:3px;height:1px;background:#3a3a3a"></div><div class="a" style="left:581px;top:458px;width:1px;height:3px;background:#3a3a3a"></div><div class="a" style="left:494px;top:471px;width:3px;height:1px;background:#3a3a3a"></div><div class="a" style="left:494px;top:469px;width:1px;height:3px;background:#3a3a3a"></div><div class="a" style="left:579px;top:471px;width:3px;height:1px;background:#3a3a3a"></div><div class="a" style="left:581px;top:469px;width:1px;height:3px;background:#3a3a3a"></div><div class="a" style="left:494px;top:472px;width:3px;height:1px;background:#3a3a3a"></div><div class="a" style="left:494px;top:472px;width:1px;height:3px;background:#3a3a3a"></div><div class="a" style="left:579px;top:472px;width:3px;height:1px;background:#3a3a3a"></div><div class="a" style="left:581px;top:472px;width:1px;height:3px;background:#3a3a3a"></div><div class="a" style="left:494px;top:485px;width:3px;height:1px;background:#3a3a3a"></div><div class="a" style="left:494px;top:483px;width:1px;height:3px;background:#3a3a3a"></div><div class="a" style="left:579px;top:485px;width:3px;height:1px;background:#3a3a3a"></div><div class="a" style="left:581px;top:483px;width:1px;height:3px;background:#3a3a3a"></div><div class="a" style="left:494px;top:486px;width:3px;height:1px;background:#3a3a3a"></div><div class="a" style="left:494px;top:486px;width:1px;height:3px;background:#3a3a3a"></div><div class="a" style="left:579px;top:486px;width:3px;height:1px;background:#3a3a3a"></div><div class="a" style="left:581px;top:486px;width:1px;height:3px;background:#3a3a3a"></div><div class="a" style="left:494px;top:499px;width:3px;height:1px;background:#3a3a3a"></div><div class="a" style="left:494px;top:497px;width:1px;height:3px;background:#3a3a3a"></div><div class="a" style="left:579px;top:499px;width:3px;height:1px;background:#3a3a3a"></div><div class="a" style="left:581px;top:497px;width:1px;height:3px;background:#3a3a3a"></div><div class="a" style="left:494px;top:500px;width:3px;height:1px;background:#3a3a3a"></div><div class="a" style="left:494px;top:500px;width:1px;height:3px;background:#3a3a3a"></div><div class="a" style="left:579px;top:500px;width:3px;height:1px;background:#3a3a3a"></div><div class="a" style="left:581px;top:500px;width:1px;height:3px;background:#3a3a3a"></div><div class="a" style="left:494px;top:513px;width:3px;height:1px;background:#3a3a3a"></div><div class="a" style="left:494px;top:511px;width:1px;height:3px;background:#3a3a3a"></div><div class="a" style="left:579px;top:513px;width:3px;height:1px;background:#3a3a3a"></div><div class="a" style="left:581px;top:511px;width:1px;height:3px;background:#3a3a3a"></div><div class="a" style="left:529px;top:500px;width:3px;height:1px;background:#3a3a3a"></div><div class="a" style="left:529px;top:500px;width:1px;height:3px;background:#3a3a3a"></div><div class="a" style="left:579px;top:500px;width:3px;height:1px;background:#3a3a3a"></div><div class="a" style="left:581px;top:500px;width:1px;height:3px;background:#3a3a3a"></div><div class="a" style="left:529px;top:513px;width:3px;height:1px;background:#3a3a3a"></div><div class="a" style="left:529px;top:511px;width:1px;height:3px;background:#3a3a3a"></div><div class="a" style="left:579px;top:513px;width:3px;height:1px;background:#3a3a3a"></div><div class="a" style="left:581px;top:511px;width:1px;height:3px;background:#3a3a3a"></div><div class="a" style="left:641px;top:458px;width:3px;height:1px;background:#3a3a3a"></div><div class="a" style="left:641px;top:458px;width:1px;height:3px;background:#3a3a3a"></div><div class="a" style="left:750px;top:458px;width:3px;height:1px;background:#3a3a3a"></div><div class="a" style="left:752px;top:458px;width:1px;height:3px;background:#3a3a3a"></div><div class="a" style="left:641px;top:471px;width:3px;height:1px;background:#3a3a3a"></div><div class="a" style="left:641px;top:469px;width:1px;height:3px;background:#3a3a3a"></div><div class="a" style="left:750px;top:471px;width:3px;height:1px;background:#3a3a3a"></div><div class="a" style="left:752px;top:469px;width:1px;height:3px;background:#3a3a3a"></div><div class="a" style="left:641px;top:472px;width:3px;height:1px;background:#3a3a3a"></div><div class="a" style="left:641px;top:472px;width:1px;height:3px;background:#3a3a3a"></div><div class="a" style="left:750px;top:472px;width:3px;height:1px;background:#3a3a3a"></div><div class="a" style="left:752px;top:472px;width:1px;height:3px;background:#3a3a3a"></div><div class="a" style="left:641px;top:485px;width:3px;height:1px;background:#3a3a3a"></div><div class="a" style="left:641px;top:483px;width:1px;height:3px;background:#3a3a3a"></div><div class="a" style="left:750px;top:485px;width:3px;height:1px;background:#3a3a3a"></div><div class="a" style="left:752px;top:483px;width:1px;height:3px;background:#3a3a3a"></div><div class="a" style="left:641px;top:486px;width:3px;height:1px;background:#3a3a3a"></div><div class="a" style="left:641px;top:486px;width:1px;height:3px;background:#3a3a3a"></div><div class="a" style="left:750px;top:486px;width:3px;height:1px;background:#3a3a3a"></div><div class="a" style="left:752px;top:486px;width:1px;height:3px;background:#3a3a3a"></div><div class="a" style="left:641px;top:499px;width:3px;height:1px;background:#3a3a3a"></div><div class="a" style="left:641px;top:497px;width:1px;height:3px;background:#3a3a3a"></div><div class="a" style="left:750px;top:499px;width:3px;height:1px;background:#3a3a3a"></div><div class="a" style="left:752px;top:497px;width:1px;height:3px;background:#3a3a3a"></div><div class="a" style="left:641px;top:500px;width:3px;height:1px;background:#3a3a3a"></div><div class="a" style="left:641px;top:500px;width:1px;height:3px;background:#3a3a3a"></div><div class="a" style="left:750px;top:500px;width:3px;height:1px;background:#3a3a3a"></div><div class="a" style="left:752px;top:500px;width:1px;height:3px;background:#3a3a3a"></div><div class="a" style="left:641px;top:513px;width:3px;height:1px;background:#3a3a3a"></div><div class="a" style="left:641px;top:511px;width:1px;height:3px;background:#3a3a3a"></div><div class="a" style="left:750px;top:513px;width:3px;height:1px;background:#3a3a3a"></div><div class="a" style="left:752px;top:511px;width:1px;height:3px;background:#3a3a3a"></div><div class="a" style="left:276px;top:533px;width:3px;height:1px;background:#3a3a3a"></div><div class="a" style="left:276px;top:533px;width:1px;height:3px;background:#3a3a3a"></div><div class="a" style="left:411px;top:533px;width:3px;height:1px;background:#3a3a3a"></div><div class="a" style="left:413px;top:533px;width:1px;height:3px;background:#3a3a3a"></div><div class="a" style="left:276px;top:545px;width:3px;height:1px;background:#3a3a3a"></div><div class="a" style="left:276px;top:543px;width:1px;height:3px;background:#3a3a3a"></div><div class="a" style="left:411px;top:545px;width:3px;height:1px;background:#3a3a3a"></div><div class="a" style="left:413px;top:543px;width:1px;height:3px;background:#3a3a3a"></div><div class="a" style="left:560px;top:533px;width:3px;height:1px;background:#3a3a3a"></div><div class="a" style="left:560px;top:533px;width:1px;height:3px;background:#3a3a3a"></div><div class="a" style="left:697px;top:533px;width:3px;height:1px;background:#3a3a3a"></div><div class="a" style="left:699px;top:533px;width:1px;height:3px;background:#3a3a3a"></div><div class="a" style="left:560px;top:545px;width:3px;height:1px;background:#3a3a3a"></div><div class="a" style="left:560px;top:543px;width:1px;height:3px;background:#3a3a3a"></div><div class="a" style="left:697px;top:545px;width:3px;height:1px;background:#3a3a3a"></div><div class="a" style="left:699px;top:543px;width:1px;height:3px;background:#3a3a3a"></div>
<div class="a" style="left:987px;top:93px;width:13px;height:459px;background:#fafaf6"></div>
<div class="a" style="left:987px;top:94px;width:13px;height:13px;background:linear-gradient(90deg,#c8d6fb,#b7c9f7);border:1px solid #fff;border-radius:2px"></div>
<div class="a" style="left:987px;top:107px;width:13px;height:245px;background:linear-gradient(90deg,#cfdcfd,#bccdf9);border:1px solid #fff;border-radius:2px"></div>
<div class="a" style="left:987px;top:540px;width:13px;height:12px;background:linear-gradient(90deg,#c8d6fb,#b7c9f7);border:1px solid #fff;border-radius:2px"></div>
<svg style="left:987px;top:94px" width="13" height="13"><path d="M3.5 8 L6.5 5 L9.5 8" fill="none" stroke="#4d6185" stroke-width="1.6"/></svg>
<svg style="left:987px;top:540px" width="13" height="12"><path d="M3.5 4.5 L6.5 7.5 L9.5 4.5" fill="none" stroke="#4d6185" stroke-width="1.6"/></svg>
<div class="a" style="left:0px;top:555px;width:1024px;height:16px;background:#ECE9D8"></div>
<div class="t" style="left:2px;top:562px;font-size:7.8px;color:#222">Pixels</div>
<div class="t" style="left:74px;top:562px;font-size:8.2px;color:#222">544,280</div>
<div class="t" style="left:142px;top:562px;font-size:8.2px;color:#222">45,20</div>
<div class="t" style="left:231px;top:562px;font-size:8.3px;color:#222">Memo12: [Discount 1]</div>
<div class="a" style="left:0px;top:571px;width:1024px;height:1px;background:#d6e0ee"></div>
<div class="a" style="left:0px;top:572px;width:1024px;height:3px;background:linear-gradient(#3462c4,#3b78e0)"></div>
<svg style="left:0;top:0" width="1024" height="575"><path d="M14.5 40.5 H20 L22.5 43 V49.5 H14.5 Z" fill="#fff" stroke="#4a4a4a"/><path d="M20 40.5 V43 H22.5" fill="#ddd" stroke="#4a4a4a"/><path d="M29.5 49 V42 H33 L34 43 H38 V49 Z" fill="#d8c860" stroke="#5a4c10"/><path d="M29.5 49 L32 45 H41.5 L38.5 49 Z" fill="#e8dc78" stroke="#5a4c10"/><path d="M34 42 Q36 39.5 39.5 40.5" fill="none" stroke="#333" stroke-width="1.1"/><path d="M38.5 39 L41 41 L38 42 Z" fill="#333"/><rect x="46.5" y="40.5" width="10.5" height="9" fill="#3c3c30" stroke="#222"/><rect x="48.5" y="41" width="6.5" height="3.5" fill="#e8e8e0"/><rect x="49" y="46.5" width="5" height="3" fill="#111"/><rect x="52.5" y="47" width="1.5" height="2" fill="#ddd"/><path d="M62.5 40.5 H68.5 L70.5 42.5 V49.5 H62.5 Z" fill="#fff" stroke="#4a4a4a"/><circle cx="69" cy="46" r="2.8" fill="#c9dde6" stroke="#333"/><path d="M71 48 L74 51" stroke="#111" stroke-width="1.6"/><path d="M88 40 L92.5 46.5 M93 40 L88.5 46.5" stroke="#222" stroke-width="1.1"/><circle cx="88.3" cy="48" r="1.7" fill="none" stroke="#3a48b0" stroke-width="1.1"/><circle cx="92.7" cy="48" r="1.7" fill="none" stroke="#3a48b0" stroke-width="1.1"/><rect x="101.5" y="40.5" width="6" height="7" fill="#d6d6d6" stroke="#333"/><path d="M103 42.5 H106 M103 44.5 H106" stroke="#333"/><rect x="105.5" y="43.5" width="7" height="6" fill="#e8e8e8" stroke="#333"/><path d="M107 46 H111 M107 48 H111" stroke="#555"/><rect x="118" y="41" width="7" height="7" fill="none" stroke="#c4c1b3"/><rect x="122" y="44" width="7.5" height="5.5" fill="#ece9d8" stroke="#c4c1b3"/><rect x="120" y="40" width="3" height="2" fill="#c4c1b3"/><path d="M143.5 45.5 Q147 41 150 44 Q151 46 149.5 47.5" fill="none" stroke="#1c2f86" stroke-width="1.8"/><path d="M141 43 L146.5 43.5 L142.5 47.5 Z" fill="#1c2f86"/><path d="M165.5 45.5 Q162 41 159 44 Q158 46 159.5 47.5" fill="none" stroke="#c4c1b3" stroke-width="1.6"/><path d="M168 43 L162.5 43.5 L166.5 47.5 Z" fill="#c4c1b3"/><rect x="184.5" y="43.5" width="6" height="5.5" fill="#6a6a60" stroke="#222"/><rect x="180.5" y="40.5" width="6.5" height="6" fill="#f2f08c" stroke="#222"/><rect x="196.5" y="40.5" width="6" height="5.5" fill="#78786e" stroke="#333"/><rect x="199.5" y="43" width="5" height="4.5" fill="#f2f08c" stroke="#666"/><rect x="201.5" y="44.5" width="6.5" height="5" fill="#78786e" stroke="#333"/><rect x="213.5" y="41.5" width="9.5" height="7.5" fill="none" stroke="#333" stroke-dasharray="1.5 1"/><circle cx="213.5" cy="41.5" r="1.2" fill="#111"/><circle cx="223" cy="41.5" r="1.2" fill="#111"/><circle cx="213.5" cy="49" r="1.2" fill="#111"/><circle cx="223" cy="49" r="1.2" fill="#111"/><circle cx="218" cy="41.5" r="1" fill="#111"/><circle cx="213.5" cy="45" r="1" fill="#111"/><path d="M235 41 L238 42 M236.5 39.5 L236.5 43 M235 43 L238 40" stroke="#b0c030" stroke-width="1"/><path d="M240 43.5 H245 M240 45.5 H245 M238 47.5 H245 M238 49.5 H245" stroke="#555" stroke-width="1"/><path d="M244.5 42 V49.5" stroke="#333"/><path d="M251.5 41 L254.5 42 M253 39.5 L253 43 M251.5 43 L254.5 40" stroke="#b0c030" stroke-width="1"/><rect x="252.5" y="43.5" width="10" height="6" fill="#e4e2da" stroke="#444"/><path d="M256 42.5 H262.5" stroke="#444"/><rect x="271.5" y="43.5" width="6.5" height="6" fill="#eee" stroke="#777"/><path d="M268.5 41 L277 48.5 M277 41 L268.5 48.5" stroke="#a8202c" stroke-width="1.7"/><path d="M288 42.5 L290 44.5 L292 42.5 M288 45.5 L290 47.5 L292 45.5" fill="none" stroke="#3050b0" stroke-width="1"/><path d="M294.5 41.5 V49.5 H287" fill="none" stroke="#555"/><path d="M308.5 40.5 V50 M311 40.5 V50 M313.5 40.5 V50 M316 40.5 V50 M307 42 H317.5 M307 44.5 H317.5 M307 47 H317.5 M307 49.5 H317.5" stroke="#222" stroke-width="1"/><path d="M325 40.5 V50 M327.5 40.5 V50 M330 40.5 V50 M323.5 42 H333 M323.5 44.5 H333 M323.5 47 H333" stroke="#999" stroke-width="1"/><path d="M329 43 L329 50 L331 48.5 L332.5 51 L333.5 50.5 L332.5 48 L335 48 Z" fill="#fff" stroke="#222" stroke-width="0.8"/><rect x="340.5" y="40.5" width="9.5" height="9.5" fill="#eceae0" stroke="#8a8a80"/><path d="M345.25 40.5 V50 M340.5 45.25 H350" stroke="#8a8a80"/><rect x="341" y="41" width="4" height="4" fill="#fff"/><path d="M340.5 45.25 H345.25 V40.5" stroke="#333" fill="none"/><path d="M362.5 40 V49.5 L364.8 47.2 L366.8 51 L368.3 50.2 L366.4 46.5 L369.5 46.5 Z" fill="#111"/><text x="367.8" y="49.8" font-family="Liberation Serif" font-size="13.5" font-weight="bold" fill="#1c2f86">?</text><path d="M452.5 41.5 V47.5 Q455.5 49 458.5 47.5 V41.5" fill="#eee" stroke="#555"/><ellipse cx="455.5" cy="41.5" rx="3" ry="1.2" fill="#fff" stroke="#555"/><path d="M460 42.5 H465 M460 45 H465 M460 47.5 H465" stroke="#333" stroke-width="1.3"/><path d="M453 50 H458" stroke="#2a9a30" stroke-width="1.2"/><path d="M457 48.5 L459 50 L457 51.5 Z" fill="#2a9a30"/><text x="181.3" y="68" font-family="Liberation Serif" font-size="10" font-weight="bold" fill="#000" stroke="#000" stroke-width="0.4">B</text><path d="M202.5 61 L199.5 68" stroke="#111" stroke-width="2"/><path d="M198.5 68 H202 M201 61 H205" stroke="#111" stroke-width="0.9"/><text x="214" y="67.5" font-family="Liberation Serif" font-size="9" font-weight="bold" fill="#000" stroke="#000" stroke-width="0.3">U</text><path d="M214 69.5 H221" stroke="#333" stroke-width="1"/><path d="M235.5 67 L241 58.5 L246.5 67 Z M238.8 63.5 H243.2" fill="#1c2060" stroke="#1c2060" stroke-width="0.6"/><circle cx="241" cy="65" r="1.2" fill="#ddd"/><rect x="235" y="67.5" width="12" height="2" fill="#1a1a40"/><rect x="253" y="66" width="9" height="4" fill="#eef04a"/><path d="M254.5 66 L260.5 59.5 L262 61 L256 67.5 Z" fill="#c0c8d8" stroke="#334" stroke-width="0.8"/><path d="M275 60.5 H283" stroke="#444" stroke-width="1.3"/><path d="M275 63.0 H281" stroke="#444" stroke-width="1.3"/><path d="M275 65.5 H283" stroke="#444" stroke-width="1.3"/><path d="M275 68.0 H281" stroke="#444" stroke-width="1.3"/><path d="M291 60.5 H300" stroke="#444" stroke-width="1.3"/><path d="M292.5 63.0 H298.5" stroke="#444" stroke-width="1.3"/><path d="M291 65.5 H300" stroke="#444" stroke-width="1.3"/><path d="M292.5 68.0 H298.5" stroke="#444" stroke-width="1.3"/><path d="M308 60.5 H317" stroke="#444" stroke-width="1.3"/><path d="M311 63.0 H317" stroke="#444" stroke-width="1.3"/><path d="M308 65.5 H317" stroke="#444" stroke-width="1.3"/><path d="M311 68.0 H317" stroke="#444" stroke-width="1.3"/><path d="M324 60.5 H333.5" stroke="#444" stroke-width="1.3"/><path d="M324 63.0 H333.5" stroke="#444" stroke-width="1.3"/><path d="M324 65.5 H333.5" stroke="#444" stroke-width="1.3"/><path d="M324 68.0 H333.5" stroke="#444" stroke-width="1.3"/><rect x="345.5" y="57.5" width="12" height="12" fill="#ecebe4" stroke="#9c9a8c"/><path d="M347.5 60 H355.5" stroke="#333" stroke-width="1.3"/><path d="M347.5 62 H353.5" stroke="#333" stroke-width="1.3"/><rect x="362.5" y="57.5" width="12" height="12" fill="#ecebe4" stroke="#9c9a8c"/><path d="M364.5 62.5 H372.5" stroke="#333" stroke-width="1.3"/><path d="M364.5 65 H370.5" stroke="#333" stroke-width="1.3"/><rect x="379.5" y="57.5" width="12" height="12" fill="#ecebe4" stroke="#9c9a8c"/><path d="M381.5 65.5 H389.5" stroke="#333" stroke-width="1.3"/><path d="M381.5 68 H387.5" stroke="#333" stroke-width="1.3"/><path d="M402 59 V63 M404 59 V63" stroke="#333" stroke-width="1.2"/><path d="M405 61 H408 V65" fill="none" stroke="#222" stroke-width="1.2"/><path d="M406 64.5 L408 67 L410 64.5 Z" fill="#222"/><path d="M407 68 H413 M407 70 H413" stroke="#333" stroke-width="1.2"/><rect x="429.5" y="59.5" width="10" height="8" fill="none" stroke="#a6a498"/><path d="M429 59.5 H440" stroke="#111" stroke-width="1.6"/><rect x="446.5" y="59.5" width="10" height="8" fill="none" stroke="#a6a498"/><path d="M446.5 59 V68" stroke="#111" stroke-width="1.6"/><rect x="462.5" y="59.5" width="10" height="8" fill="none" stroke="#a6a498"/><path d="M462 67.5 H473" stroke="#111" stroke-width="1.6"/><rect x="479.5" y="59.5" width="10" height="8" fill="none" stroke="#a6a498"/><path d="M489.5 59 V68" stroke="#111" stroke-width="1.6"/><rect x="502" y="60" width="9" height="7" fill="none" stroke="#111" stroke-width="1.8"/><rect x="518.5" y="59.5" width="9.5" height="8" fill="none" stroke="#555" stroke-dasharray="1.2 1.2"/><path d="M542 63 L545.5 59.5 L549.5 63.5 L546 67 Z" fill="#fff" stroke="#333"/><path d="M548 62 Q551 63 550.5 66" fill="none" stroke="#2c3c80" stroke-width="1.3"/><rect x="540" y="67.5" width="12" height="2" fill="#333"/><rect x="540.5" y="66.5" width="11" height="1" fill="#ccc"/><path d="M559 66 L566 58.5 L567.5 60 L560.5 67 Z" fill="#2c3c80"/><path d="M565 59 L567 57.5" stroke="#c8b030" stroke-width="1"/><rect x="556" y="67.5" width="12" height="2" fill="#111"/><path d="M572 60 H584" stroke="#555" stroke-width="1.3"/><path d="M572 62.5 H584" stroke="#555" stroke-width="1" stroke-dasharray="2 1"/><path d="M572 65 H584" stroke="#555" stroke-width="1" stroke-dasharray="1 1"/><path d="M572 67.5 H584" stroke="#555" stroke-width="1" stroke-dasharray="2 1 1 1"/><path d="M6.5 87.5 V97.5 L8.8 95.3 L10.8 99 L12.3 98.2 L10.4 94.6 L13.5 94.6 Z" fill="#fff" stroke="#222" stroke-width="0.9"/><rect x="5.5" y="110.5" width="8.5" height="10.5" fill="#d8dcef" stroke="#333"/><path d="M7 113 H12.5 M7 115.5 H12.5 M7 118 H12.5" stroke="#283878" stroke-width="1.2"/><path d="M3 129.5 H16 M3 132.5 H16" stroke="#777" stroke-width="1.2" stroke-dasharray="2 1.3"/><defs><linearGradient id="pg" x1="0" y1="0" x2="1" y2="1"><stop offset="0" stop-color="#20a080"/><stop offset="0.5" stop-color="#60d0e0"/><stop offset="1" stop-color="#106060"/></linearGradient></defs><rect x="4.5" y="144.5" width="9.5" height="7.5" fill="url(#pg)" stroke="#233"/><path d="M5 151 L8 148 L11 150 L14 147.5 V151.5 H5 Z" fill="#0a5040"/><rect x="4.5" y="159.5" width="7" height="8" fill="#eee" stroke="#444"/><path d="M6 161.5 H10 M6 163.5 H10" stroke="#333"/><rect x="8.5" y="165" width="7" height="5.5" fill="#e6e6e6" stroke="#444"/><path d="M10 167 H14 M10 169 H14" stroke="#555"/><path d="M6 184 L13 176.5 L15 178.5 L8 186 L5.5 186.5 Z" fill="#e8e060" stroke="#333" stroke-width="0.9"/><path d="M4 187.5 H14" stroke="#555" stroke-width="1"/><rect x="5.5" y="192.5" width="8.5" height="10.5" fill="#fff" stroke="#555"/><path d="M7 195 Q9 194 8 197 Q10 197 12 195.5" stroke="#b03040" fill="none"/><path d="M7 199 H12.5 M7 201 H12.5" stroke="#444"/><path d="M7.5 212.5 L10.5 207.5 L13.5 212.5 Z" fill="#2040b0" stroke="#102070" stroke-width="0.6"/><circle cx="6.5" cy="215" r="3" fill="#208040" stroke="#105020" stroke-width="0.6"/><rect x="9.5" y="214.5" width="5.5" height="5.5" fill="#fff" stroke="#222"/><path d="M1010 89.5 H1013.5 V91.5" fill="none" stroke="#a8a69a" stroke-width="1"/><path d="M1014 95.5 H1019.5 V97.5" fill="none" stroke="#a8a69a" stroke-width="1"/><path d="M1009.5 95.3 H1013.5" fill="none" stroke="#111" stroke-width="1.2"/><path d="M1008.3 95.3 L1010.8 93.3 V97.3 Z" fill="#111"/><path d="M1013 103.5 H1018.5 V106" fill="none" stroke="#a8a69a" stroke-width="1"/><path d="M1010 108.5 H1015.5 V113.5" fill="none" stroke="#a8a69a" stroke-width="1"/><path d="M1011 105.3 H1014" fill="none" stroke="#111" stroke-width="1.2"/><path d="M1009.8 105.3 L1012 103.5 V107.1 Z" fill="#111"/><path d="M1014.5 113.6 H1018.5" fill="none" stroke="#111" stroke-width="1.2"/><path d="M1020 113.6 L1017.8 111.8 V115.4 Z" fill="#111"/><path d="M1008.5 121.2 H1020" fill="none" stroke="#111" stroke-width="1.5"/><path d="M1008.5 118.5 V124 M1020 118.5 V124" fill="none" stroke="#111" stroke-width="1.2"/><path d="M1010 124.5 H1015.5 V129.5" fill="none" stroke="#a8a69a" stroke-width="1"/><path d="M1013 126.5 H1018 V130" fill="none" stroke="#a8a69a" stroke-width="1"/><path d="M1011.5 138.3 H1014" fill="none" stroke="#111" stroke-width="1.2"/><path d="M1015.5 138.3 L1013.3 136.5 V140.1 Z" fill="#111"/><path d="M1008.5 141 V145.5 H1010.5 M1011.5 141 V145.5 H1013.5 M1017.5 141 V145.5 H1019.5" fill="none" stroke="#a8a69a" stroke-width="1"/><path d="M1014 154.5 H1019 V156.5" fill="none" stroke="#a8a69a" stroke-width="1"/><path d="M1009 159 V162.5 H1013.5 V160" fill="none" stroke="#a8a69a" stroke-width="1"/><path d="M1015.5 161.3 H1018.5" fill="none" stroke="#111" stroke-width="1.2"/><path d="M1020 161.3 L1017.8 159.5 V163.1 Z" fill="#111"/><path d="M1011.5 176.5 V180" fill="none" stroke="#111" stroke-width="1.2"/><path d="M1011.5 175 L1009.7 177.3 H1013.3 Z" fill="#111"/><path d="M1010.5 180.5 V186 H1012" fill="none" stroke="#a8a69a" stroke-width="1"/><path d="M1018.5 176.5 V181 H1016.5" fill="none" stroke="#a8a69a" stroke-width="1"/><path d="M1010.5 194 V198.5" fill="none" stroke="#111" stroke-width="1.2"/><path d="M1010.5 200 L1008.7 197.8 H1012.3 Z" fill="#111"/><path d="M1018 195.5 V198.5" fill="none" stroke="#111" stroke-width="1.2"/><path d="M1018 194 L1016.2 196.2 H1019.8 Z" fill="#111"/><path d="M1012.5 192.5 V197" fill="none" stroke="#a8a69a" stroke-width="1"/><path d="M1015.5 198 V202.5 H1019" fill="none" stroke="#a8a69a" stroke-width="1"/><path d="M1018.5 208 V220" fill="none" stroke="#111" stroke-width="1.5"/><path d="M1016 208.5 H1021 M1016 219.5 H1021" fill="none" stroke="#111" stroke-width="1.2"/><path d="M1009.5 213 V219 H1011.5 M1012.5 210 V219 H1015" fill="none" stroke="#a8a69a" stroke-width="1"/><path d="M1010 225.5 H1014.5 M1010 228.5 H1014.5 M1010 231.5 H1014.5 M1010 234.5 H1014.5" fill="none" stroke="#a8a69a" stroke-width="1"/><path d="M1018.5 226.5 V230" fill="none" stroke="#111" stroke-width="1.2"/><path d="M1018.5 231.5 L1016.7 229.3 H1020.3 Z" fill="#111"/><path d="M1012 242.5 V250 H1014" fill="none" stroke="#a8a69a" stroke-width="1"/><path d="M1018.5 246 V252 H1016.5" fill="none" stroke="#a8a69a" stroke-width="1"/><path d="M1010.5 247.5 V251" fill="none" stroke="#111" stroke-width="1.2"/><path d="M1010.5 252.8 L1008.7 250.5 H1012.3 Z" fill="#111"/></svg>
<div class="a" style="left:991px;top:225px;width:5px;height:1px;background:#eef3fe"></div>
<div class="a" style="left:991px;top:226px;width:5px;height:1px;background:#a8bce8"></div>
<div class="a" style="left:991px;top:228px;width:5px;height:1px;background:#eef3fe"></div>
<div class="a" style="left:991px;top:229px;width:5px;height:1px;background:#a8bce8"></div>
<div class="a" style="left:991px;top:231px;width:5px;height:1px;background:#eef3fe"></div>
<div class="a" style="left:991px;top:232px;width:5px;height:1px;background:#a8bce8"></div>
<svg style="left:0;top:0" width="1024" height="575"><path d="M61.5 560 V570 M58.5 562.5 H64" stroke="#333" stroke-width="0.9"/><rect x="63.5" y="563.5" width="7" height="6" fill="none" stroke="#555" stroke-dasharray="1 1"/><rect x="131.5" y="561.5" width="7" height="8" fill="none" stroke="#555" stroke-dasharray="1 1"/><path d="M130 559.5 H139 M129.5 563 V570 M128 569.5 H131" stroke="#333" stroke-width="0.9"/></svg>
<div class="a" style="left:223px;top:345px;width:6px;height:6px;background:#fff;border:1px solid #555"></div>
<div class="a" style="left:224px;top:347px;width:4px;height:1px;background:#222"></div>
<div class="a" style="left:627.2px;top:309.7px;width:3.6px;height:3.6px;border-radius:50%;background:#111"></div>
<div class="a" style="left:644.7px;top:309.7px;width:3.6px;height:3.6px;border-radius:50%;background:#111"></div>
<div class="a" style="left:661.7px;top:309.7px;width:3.6px;height:3.6px;border-radius:50%;background:#111"></div>
<div class="a" style="left:627.2px;top:317.2px;width:3.6px;height:3.6px;border-radius:50%;background:#111"></div>
<div class="a" style="left:661.7px;top:317.2px;width:3.6px;height:3.6px;border-radius:50%;background:#111"></div>
<div class="a" style="left:627.2px;top:324.7px;width:3.6px;height:3.6px;border-radius:50%;background:#111"></div>
<div class="a" style="left:644.7px;top:324.7px;width:3.6px;height:3.6px;border-radius:50%;background:#111"></div>
<div class="a" style="left:661.7px;top:324.7px;width:3.6px;height:3.6px;border-radius:50%;background:#111"></div>
<div class="a" style="left:406px;top:194px;width:212px;height:186px;background:#0a2a90;border-radius:6px 6px 0 0"></div>
<div class="a" style="left:406px;top:212px;width:3px;height:166px;background:linear-gradient(90deg,#1c48a8,#2f62c4)"></div>
<div class="a" style="left:409px;top:215px;width:206px;height:163px;background:#d6e2f4"></div>
<div class="a" style="left:406px;top:194px;width:212px;height:21px;background:linear-gradient(#0a40b8 0px,#3a8af8 1.5px,#0c68f4 4px,#0864f6 12px,#0a60ee 17px,#0452d8 19px,#0040c0 21px);border-radius:6px 6px 0 0"></div>
<div class="t" style="left:412px;top:202px;font-size:10px;font-weight:bold;color:#fff">Variable formatting</div>
<div class="a" style="left:410px;top:215px;width:204px;height:162px;background:#ECE9D8"></div>
<div class="a" style="left:412px;top:221px;width:199px;height:128px;border:1px solid #d0cdbd;border-radius:3px"></div>
<div class="a" style="left:417px;top:228px;width:91px;height:73px;background:#fff;border:1px solid #7f9db9"></div>
<div class="a" style="left:514px;top:228px;width:90px;height:73px;background:#fff;border:1px solid #7f9db9"></div>
<div class="a" style="left:419px;top:240px;width:88px;height:9px;background:#316ac5"></div>
<div class="a" style="left:515px;top:270px;width:88px;height:9px;background:#316ac5"></div>
<div class="t" style="left:421px;top:231px;font-size:8.4px;color:#111">Text</div>
<div class="t" style="left:421px;top:241px;font-size:8.4px;color:#fff">Number</div>
<div class="t" style="left:421px;top:251px;font-size:8.4px;color:#111">Date</div>
<div class="t" style="left:421px;top:261px;font-size:8.4px;color:#111">Time</div>
<div class="t" style="left:421px;top:271px;font-size:8.4px;color:#111">Boolean</div>
<div class="t" style="left:517px;top:231px;font-size:8.4px;color:#111">1234,5</div>
<div class="t" style="left:517px;top:241px;font-size:8.4px;color:#111">1234,50</div>
<div class="t" style="left:517px;top:251px;font-size:8.4px;color:#111">1 234,5</div>
<div class="t" style="left:517px;top:261px;font-size:8.4px;color:#111">1 234,50</div>
<div class="t" style="left:517px;top:271px;font-size:8.4px;color:#fff">Custom</div>
<div class="t" style="left:418px;top:311px;font-size:8px;color:#222"><u>D</u>ecimal digits</div>
<div class="a" style="left:474px;top:306px;width:19px;height:15px;background:#fff;border:1px solid #7f9db9"></div>
<div class="t" style="left:478px;top:310px;font-size:8.5px;color:#111">2</div>
<div class="t" style="left:518px;top:311px;font-size:7.7px;color:#222">Decimal <u>s</u>eparator</div>
<div class="a" style="left:586px;top:306px;width:18px;height:15px;background:#fff;border:1px solid #7f9db9"></div>
<div class="t" style="left:590px;top:310px;font-size:8.5px;color:#111">.</div>
<div class="t" style="left:458px;top:332px;font-size:7.8px;color:#222">Custom <u>f</u>ormat</div>
<div class="a" style="left:513px;top:327px;width:91px;height:15px;background:#fff;border:1px solid #7f9db9"></div>
<div class="t" style="left:517px;top:331.8px;font-size:7.8px;color:#111">#,0.00%</div>
<div class="a" style="left:539px;top:330px;width:1px;height:10px;background:#000"></div>
<div class="a" style="left:497px;top:357px;width:55px;height:17px;background:linear-gradient(#fff,#f0f0ea 80%,#dcdad0);border:1px solid #003c74;border-radius:3px;box-shadow:inset 0 0 0 1px #9ab8e8"></div>
<div class="t" style="left:519px;top:361px;font-size:8.6px;color:#111">OK</div>
<div class="a" style="left:557px;top:357px;width:55px;height:17px;background:linear-gradient(#fff,#f0f0ea 80%,#dcdad0);border:1px solid #003c74;border-radius:3px"></div>
<div class="t" style="left:572px;top:361px;font-size:8.6px;color:#111">Cancel</div>
<div class="a" style="left:581px;top:198px;width:16px;height:15px;background:linear-gradient(135deg,#5d8cf6,#2b63e0);border:1px solid #fff;border-radius:3px"></div>
<div class="a" style="left:598px;top:198px;width:16px;height:15px;background:linear-gradient(135deg,#f08a6a,#d4502a);border:1px solid #fff;border-radius:3px"></div>
<svg style="left:581px;top:198px" width="34" height="15"><text x="4.5" y="12" font-family="Liberation Sans" font-size="12" font-weight="bold" fill="#fff">?</text><path d="M21.5 3.5 L28.5 10.5 M28.5 3.5 L21.5 10.5" stroke="#fff" stroke-width="1.8"/></svg>
<svg style="left:0;top:0" width="1024" height="575"><ellipse cx="545" cy="334.5" rx="36.5" ry="17.5" transform="rotate(-3 545 334.5)" fill="none" stroke="#333" stroke-width="1"/></svg>
</div></body></html>
